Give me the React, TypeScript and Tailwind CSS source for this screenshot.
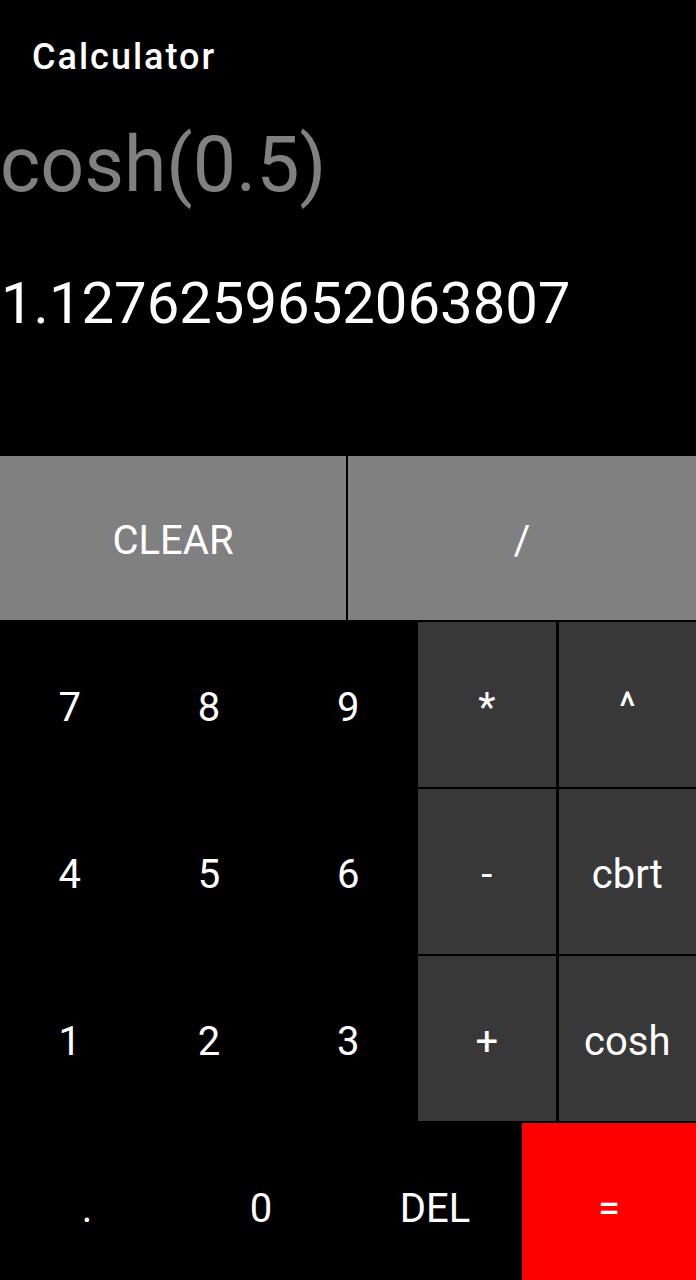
import React from 'react';

const font = { fontFamily: 'Roboto, "Noto Sans", sans-serif' };

const Key: React.FC<{ label: string; className?: string }> = ({ label, className }) => (
  <div className={`flex items-center justify-center pt-[6px] text-[40px] leading-none text-white ${className ?? ''}`}>
    {label}
  </div>
);

const App: React.FC = () => {
  const digits = ['7', '8', '9', '4', '5', '6', '1', '2', '3'];
  const ops = ['*', '^', '-', 'cbrt', '+', 'cosh'];

  return (
    <div className="h-[1280px] w-[696px] overflow-hidden bg-black" style={font}>
      {/* display */}
      <div className="flex h-[456px] flex-col">
        <div className="pl-[32px] pt-[39px] text-[36px] font-medium leading-none tracking-[2px] text-white">
          Calculator
        </div>
        <div className="mt-[52px] text-[77px] leading-none text-[#808080]">cosh(0.5)</div>
        <div className="mt-[70px] pl-[1px] text-[58px] leading-none text-white">1.1276259652063807</div>
      </div>

      {/* keypad */}
      <div className="flex h-[164px] gap-[2px]">
        <Key label="CLEAR" className="w-[346px] bg-[#808080]" />
        <Key label="/" className="flex-1 bg-[#808080]" />
      </div>

      <div className="mt-[2px] flex">
        <div className="grid w-[418px] grid-cols-3 grid-rows-[165px_165px_165px] gap-y-[2px]">
          {digits.map((d) => (
            <Key key={d} label={d} />
          ))}
        </div>
        <div className="grid flex-1 grid-cols-2 grid-rows-[165px_165px_165px] gap-x-[3px] gap-y-[2px]">
          {ops.map((o) => (
            <Key key={o} label={o} className="bg-[#383838]" />
          ))}
        </div>
      </div>

      <div className="mt-[2px] grid h-[165px] grid-cols-4">
        <Key label="." />
        <Key label="0" />
        <Key label="DEL" />
        <Key label="=" className="bg-[#ff0000]" />
      </div>
    </div>
  );
};

export default App;
